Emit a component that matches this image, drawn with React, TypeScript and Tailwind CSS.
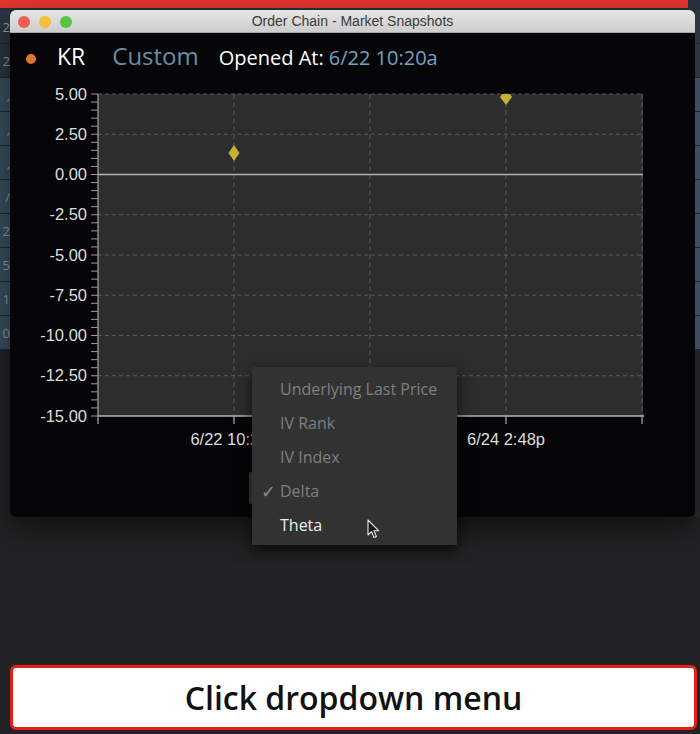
import React from 'react';

const yLabels = ['5.00', '2.50', '0.00', '-2.50', '-5.00', '-7.50', '-10.00', '-12.50', '-15.00'];
const menuItems = [
  { label: 'Underlying Last Price', checked: false, active: false },
  { label: 'IV Rank', checked: false, active: false },
  { label: 'IV Index', checked: false, active: false },
  { label: 'Delta', checked: true, active: false },
  { label: 'Theta', checked: false, active: true },
];
const sideRows = ['2', '2', ',', ',', ',', '/', '2', '5', '1', '0'];

// plot area inside the svg (svg sits at page x=10, y=80)
const PX0 = 88;
const PX1 = 633;
const PY0 = 14;
const PY1 = 336;
const STEP = (PY1 - PY0) / 8;
const vGrid = [224, 360, 496, 632];

function Chart() {
  const minor: number[] = [];
  for (let i = 0; i <= 40; i++) minor.push(PY0 + (i * STEP) / 5);

  return (
    <svg width="685" height="400" className="block">
      <defs>
        <clipPath id="plot">
          <rect x={PX0} y={PY0} width={PX1 - PX0} height={PY1 - PY0} />
        </clipPath>
      </defs>
      <rect x={PX0} y={PY0} width={PX1 - PX0} height={PY1 - PY0} fill="#2d2d2d" />

      {/* horizontal grid */}
      {yLabels.map((_, i) => {
        const y = PY0 + i * STEP;
        if (i === 2 || i === 8) return null;
        return (
          <line key={i} x1={PX0} x2={PX1} y1={y} y2={y} stroke="#5a5a5a" strokeDasharray="4 3" />
        );
      })}
      {/* vertical grid */}
      {vGrid.map((x) => (
        <line key={x} x1={x} x2={x} y1={PY0} y2={PY1} stroke="#5a5a5a" strokeDasharray="5 3" />
      ))}

      {/* zero line + axes */}
      <line x1={PX0} x2={PX1} y1={PY0 + 2 * STEP} y2={PY0 + 2 * STEP} stroke="#b4b4b4" strokeWidth="1.3" />
      <line x1={PX0} x2={PX1 + 1} y1={PY1} y2={PY1} stroke="#b4b4b4" strokeWidth="1.3" />
      <line x1={PX0} x2={PX0} y1={PY0} y2={PY1 + 8} stroke="#a8a8a8" strokeWidth="1.2" />
      {minor.map((y, i) => (
        <line key={i} x1={PX0 - 7} x2={PX0} y1={y} y2={y} stroke="#9a9a9a" strokeWidth="1" />
      ))}
      {vGrid.map((x) => (
        <line key={x} x1={x} x2={x} y1={PY1} y2={PY1 + 8} stroke="#a8a8a8" strokeWidth="1.2" />
      ))}

      {/* points */}
      <g clipPath="url(#plot)" fill="#c2b233">
        <path d="M224 65 L229.5 73 L224 81 L218.5 73 Z" />
        <path d="M496 8 L502 17 L496 25 L490 17 Z" />
      </g>

      {/* y labels */}
      {yLabels.map((l, i) => (
        <text
          key={l}
          x={PX0 - 11}
          y={PY0 + i * STEP + 5.5}
          textAnchor="end"
          fill="#dedede"
          fontSize="16.5"
          fontFamily="'Liberation Sans', Arial, sans-serif"
        >
          {l}
        </text>
      ))}

      {/* x labels */}
      <text x="224" y="365" textAnchor="middle" fill="#dedede" fontSize="16.5" fontFamily="'Liberation Sans', Arial, sans-serif">
        6/22 10:20a
      </text>
      <text x="496" y="365" textAnchor="middle" fill="#dedede" fontSize="16.5" fontFamily="'Liberation Sans', Arial, sans-serif">
        6/24 2:48p
      </text>
    </svg>
  );
}

function SideStrip({ width, labels }: { width: string; labels: boolean }) {
  return (
    <div className={`${width} flex flex-col overflow-hidden`}>
      {sideRows.map((t, i) => (
        <div
          key={i}
          className={`h-[34px] shrink-0 border-b border-[#1c2630] text-[13px] leading-[34px] text-right text-[#8da0b0] ${
            i < 2 ? 'bg-[#2a3643]' : 'bg-[#3a4f61]'
          }`}
        >
          {labels ? t : null}
        </div>
      ))}
      <div className="flex-1 bg-[#222326]" />
    </div>
  );
}

export default function App() {
  return (
    <div
      className="w-[700px] h-[734px] bg-[#232325] flex flex-col overflow-hidden"
      style={{ fontFamily: "'Open Sans', 'Noto Sans', sans-serif" }}
    >
      {/* desktop strip above the window */}
      <div className="h-[10px] flex flex-col bg-[#27313b]">
        <div className="h-[8px] w-[688px] bg-[#e3352f]" />
      </div>

      <div className="flex h-[507px]">
        <SideStrip width="w-[10px]" labels />

        {/* window */}
        <div className="w-[685px] flex flex-col shadow-[0_12px_30px_rgba(0,0,0,0.55)] rounded-[6px]">
          <div className="h-[23px] relative flex items-center justify-center rounded-t-[6px] bg-gradient-to-b from-[#e6e6e6] to-[#cdcdcd] border-b border-[#a9a9a9]">
            <div className="absolute left-[8px] top-[6px] flex gap-[9px]">
              <span className="w-[12px] h-[12px] rounded-full bg-[#ee5c56]" />
              <span className="w-[12px] h-[12px] rounded-full bg-[#f5be3b]" />
              <span className="w-[12px] h-[12px] rounded-full bg-[#5bc344]" />
            </div>
            <span className="text-[14px] text-[#3a3a3a]" style={{ fontFamily: "'Liberation Sans', Arial, sans-serif" }}>
              Order Chain - Market Snapshots
            </span>
          </div>

          <div className="relative h-[484px] bg-[#050508] rounded-b-[6px]">
            {/* header */}
            <div className="h-[47px] flex items-baseline pl-[16px] pt-[5px]">
              <span className="w-[10px] h-[10px] rounded-full bg-[#e2722f] self-center -mt-[1px]" />
              <span className="ml-[21px] text-[23px] text-white">KR</span>
              <span className="ml-[27px] text-[24px] text-[#6a8ca6]">Custom</span>
              <span className="ml-[20px] text-[20px] text-white">Opened At:</span>
              <span className="ml-[5px] text-[20px] text-[#74a2c2]">6/22 10:20a</span>
            </div>

            <Chart />

            {/* select behind the open menu */}
            <div className="absolute left-[239px] top-[439px] w-[120px] h-[32px] bg-[#3a3a3a] rounded-[2px]" />

            {/* open dropdown */}
            <div className="absolute left-[242px] top-[334px] w-[205px] pt-[5px] pb-[3px] bg-[#323232] shadow-[0_6px_14px_rgba(0,0,0,0.7)]">
              {menuItems.map((m) => (
                <div
                  key={m.label}
                  className={`h-[34px] flex items-center relative pl-[28px] text-[16px] ${
                    m.active ? 'text-[#ededed]' : 'text-[#7f7f7f]'
                  }`}
                >
                  {m.checked && <span className="absolute left-[9px] text-[18px] text-[#8a8a8a]">✓</span>}
                  {m.label}
                </div>
              ))}
            </div>

            {/* mouse pointer */}
            <svg className="absolute left-[357px] top-[486px]" width="14" height="21" viewBox="0 0 14 21">
              <path d="M1 1 L1 16 L4.5 12.6 L7 18.5 L9.4 17.5 L7 11.8 L11.8 11.8 Z" fill="#1a1a1a" stroke="#e8e8e8" strokeWidth="1.1" strokeLinejoin="round" />
            </svg>
          </div>
        </div>

        <SideStrip width="w-[5px]" labels={false} />
      </div>

      <div className="flex-1" />

      {/* caption */}
      <div className="ml-[10px] mb-[4px] w-[687px] h-[65px] shrink-0 bg-white border-[3px] border-[#e4201c] rounded-[6px] flex items-center justify-center">
        <span className="text-[32px] font-semibold text-[#111]">Click dropdown menu</span>
      </div>
    </div>
  );
}
